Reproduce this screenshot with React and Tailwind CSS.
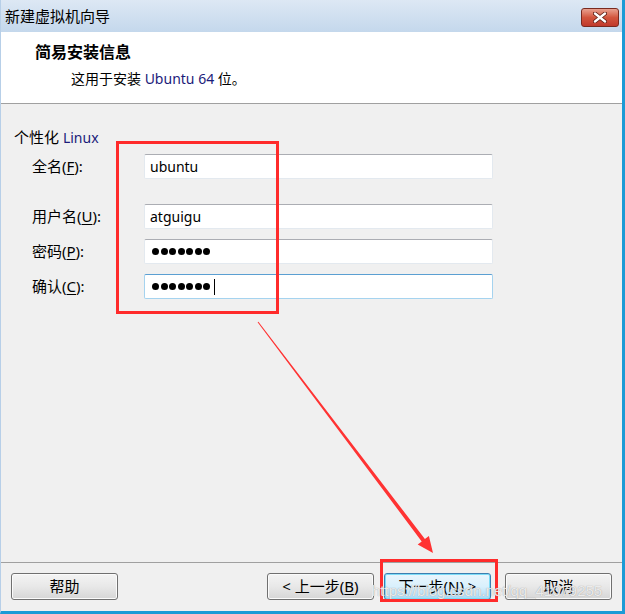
import React from "react";

const font = { fontFamily: '"Noto Sans", "Noto Sans CJK SC", sans-serif' };

const Key = ({ children }) => <span className="underline underline-offset-2">{children}</span>;

const Field = ({ value, password, focused, cursor }) => (
  <div
    className={
      "w-[349px] h-[25px] bg-white flex items-center pl-[5px] border rounded-[2px] " +
      (focused
        ? "border-[#a5d3ef] border-t-[#5b9fd2]"
        : "border-[#e3e9ef] border-t-[#abadb3]")
    }
  >
    {password ? (
      <div className="flex items-center gap-[1.5px] pl-[2px]">
        {Array.from({ length: 7 }).map((_, i) => (
          <span key={i} className="w-[7px] h-[7px] rounded-full bg-black" />
        ))}
        {cursor && <span className="ml-[2px] w-px h-[16px] bg-black" />}
      </div>
    ) : (
      <span className="text-[14px] text-black">{value}</span>
    )}
  </div>
);

const Row = ({ label, k, className, ...rest }) => (
  <div className={"flex items-center h-[25px] " + className}>
    <div className="w-[130px] pl-[18px] text-[15px] text-black">
      {label}(<Key>{k}</Key>):
    </div>
    <Field {...rest} />
  </div>
);

const Button = ({ children, focused }) => (
  <div
    className={
      "w-[107px] h-[27px] flex items-center justify-center text-[15px] text-black rounded-[3px] border " +
      (focused
        ? "border-[#3c7fb1] bg-gradient-to-b from-[#eaf6fd] via-[#d9f0fc] to-[#a7d9f5] shadow-[inset_0_0_0_1px_#7ddcf7]"
        : "border-[#707070] bg-gradient-to-b from-[#f4f4f4] via-[#e8e8e8] to-[#d6d6d6] shadow-[inset_0_0_0_1px_#fbfbfb]")
    }
  >
    {children}
  </div>
);

export default function App() {
  return (
    <div
      style={font}
      className="relative w-[625px] h-[614px] overflow-hidden flex flex-col bg-[#f0f0f0] border-l border-l-[#b7cfe8] border-r-[3px] border-r-[#1c9bd6] border-b-[3px] border-b-[#1c9bd6]"
    >
      {/* title bar */}
      <div className="h-[32px] shrink-0 flex items-start bg-gradient-to-b from-[#dde8f4] to-[#c4d8ec]">
        <span className="pl-[4px] pt-[6px] text-[15px] leading-[20px] text-black">新建虚拟机向导</span>
        <div className="ml-auto mr-[3px] mt-[8px] w-[38px] h-[19px] rounded-[3px] border border-[#7a2a1f] bg-gradient-to-b from-[#e8a08f] via-[#d2553d] to-[#c0392b] flex items-center justify-center">
          <svg width="14" height="11" viewBox="0 0 14 11">
            <path d="M2 1.5 L12 9.5 M12 1.5 L2 9.5" stroke="#5a1a10" strokeWidth="4" strokeLinecap="round" />
            <path d="M2 1.5 L12 9.5 M12 1.5 L2 9.5" stroke="#ffffff" strokeWidth="2.4" strokeLinecap="round" />
          </svg>
        </div>
      </div>

      {/* header */}
      <div className="h-[72px] shrink-0 bg-white border-b border-[#a0a0a0] pt-[10px]">
        <div className="pl-[34px] text-[16px] leading-[20px] font-bold text-black">简易安装信息</div>
        <div className="pl-[70px] mt-[7px] text-[14px] leading-[20px] text-black">
          这用于安装 <span className="text-[#1b1b7a]">Ubuntu 64</span> 位。
        </div>
      </div>

      {/* body */}
      <div className="flex-1 pt-[23px] pl-[13px]">
        <div className="text-[15px] leading-[20px] text-black">
          个性化 <span className="text-[#1b1b7a] text-[14px]">Linux</span>
        </div>
        <Row label="全名" k="F" value="ubuntu" className="mt-[6px]" />
        <Row label="用户名" k="U" value="atguigu" className="mt-[25px]" />
        <Row label="密码" k="P" password className="mt-[10px]" />
        <Row label="确认" k="C" password focused cursor className="mt-[10px]" />
      </div>

      {/* footer */}
      <div className="h-[49px] shrink-0 border-t border-[#a0a0a0] flex items-start pt-[10px] px-[10px]">
        <Button>帮助</Button>
        <div className="ml-auto flex gap-[10px]">
          <Button>&lt; 上一步(<Key>B</Key>)</Button>
          <Button focused>
            下一步(<Key>N</Key>) &gt;
          </Button>
          <div className="ml-[4px]">
            <Button>取消</Button>
          </div>
        </div>
      </div>

      {/* annotations */}
      <div className="absolute left-[115px] top-[141px] w-[163px] h-[173px] border-[3px] border-[#ff2b2b]" />
      <div className="absolute left-[379px] top-[559px] w-[118px] h-[43px] border-[3px] border-[#ff2b2b]" />
      <svg className="absolute left-0 top-0" width="625" height="614">
        <polygon
          points="256.6,322.3 420.7,541.4 416.7,544.5 432,553 427.9,536 423.9,539 257.4,321.7"
          fill="#ff3333"
        />
      </svg>
      <div
        className="absolute left-[371px] top-[580px] text-[15px] text-white/80 [text-shadow:0_0_1px_#8a8a8a]"
        style={{ fontFamily: '"Liberation Sans", sans-serif' }}
      >
        https://blog.csdn.net/qq_41079255
      </div>
    </div>
  );
}
